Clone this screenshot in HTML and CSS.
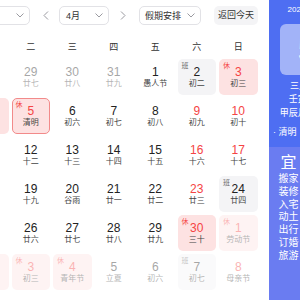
FILE: index.html
```html
<!DOCTYPE html>
<html lang="zh-CN">
<head>
  <meta charset="UTF-8">
  <title>万年历</title>
  <link rel="stylesheet" href="styles.css">
</head>
<body>

<div class="cal">
  <div class="main">
    <div class="toolbar">
      <div class="select year"><span>2022年</span><svg class="caret" width="8" height="5" viewBox="0 0 8 5"><polyline points="0.5,0.5 4,4 7.5,0.5"/></svg></div>
      <div class="arrow prev"><svg width="6" height="9" viewBox="0 0 6 9"><polyline points="5,0.5 1,4.5 5,8.5"/></svg></div>
      <div class="select month"><span>4月</span><svg class="caret" width="8" height="5" viewBox="0 0 8 5"><polyline points="0.5,0.5 4,4 7.5,0.5"/></svg></div>
      <div class="arrow next"><svg width="6" height="9" viewBox="0 0 6 9"><polyline points="1,0.5 5,4.5 1,8.5"/></svg></div>
      <div class="select holiday"><span>假期安排</span><svg class="caret" width="8" height="5" viewBox="0 0 8 5"><polyline points="0.5,0.5 4,4 7.5,0.5"/></svg></div>
      <div class="today-btn">返回今天</div>
    </div>

    <div class="weekdays">
      <span>一</span><span>二</span><span>三</span><span>四</span><span>五</span><span>六</span><span>日</span>
    </div>

    <div class="days">
      <div class="day other"><span class="num">28</span><span class="lunar">廿六</span></div>
      <div class="day other"><span class="num">29</span><span class="lunar">廿七</span></div>
      <div class="day other"><span class="num">30</span><span class="lunar">廿八</span></div>
      <div class="day other"><span class="num">31</span><span class="lunar">廿九</span></div>
      <div class="day"><span class="num">1</span><span class="lunar">愚人节</span></div>
      <div class="day work"><span class="tag">班</span><span class="num">2</span><span class="lunar">初二</span></div>
      <div class="day rest"><span class="tag">休</span><span class="num">3</span><span class="lunar">初三</span></div>

      <div class="day rest"><span class="tag">休</span><span class="num">4</span><span class="lunar">初四</span></div>
      <div class="day rest sel"><span class="tag">休</span><span class="num">5</span><span class="lunar">清明</span></div>
      <div class="day"><span class="num">6</span><span class="lunar">初六</span></div>
      <div class="day"><span class="num">7</span><span class="lunar">初七</span></div>
      <div class="day"><span class="num">8</span><span class="lunar">初八</span></div>
      <div class="day wknd"><span class="num">9</span><span class="lunar">初九</span></div>
      <div class="day wknd"><span class="num">10</span><span class="lunar">初十</span></div>

      <div class="day"><span class="num">11</span><span class="lunar">十一</span></div>
      <div class="day"><span class="num">12</span><span class="lunar">十二</span></div>
      <div class="day"><span class="num">13</span><span class="lunar">十三</span></div>
      <div class="day"><span class="num">14</span><span class="lunar">十四</span></div>
      <div class="day"><span class="num">15</span><span class="lunar">十五</span></div>
      <div class="day wknd"><span class="num">16</span><span class="lunar">十六</span></div>
      <div class="day wknd"><span class="num">17</span><span class="lunar">十七</span></div>

      <div class="day"><span class="num">18</span><span class="lunar">十八</span></div>
      <div class="day"><span class="num">19</span><span class="lunar">十九</span></div>
      <div class="day"><span class="num">20</span><span class="lunar">谷雨</span></div>
      <div class="day"><span class="num">21</span><span class="lunar">廿一</span></div>
      <div class="day"><span class="num">22</span><span class="lunar">廿二</span></div>
      <div class="day wknd"><span class="num">23</span><span class="lunar">廿三</span></div>
      <div class="day work"><span class="tag">班</span><span class="num">24</span><span class="lunar">廿四</span></div>

      <div class="day"><span class="num">25</span><span class="lunar">廿五</span></div>
      <div class="day"><span class="num">26</span><span class="lunar">廿六</span></div>
      <div class="day"><span class="num">27</span><span class="lunar">廿七</span></div>
      <div class="day"><span class="num">28</span><span class="lunar">廿八</span></div>
      <div class="day"><span class="num">29</span><span class="lunar">廿九</span></div>
      <div class="day rest"><span class="tag">休</span><span class="num">30</span><span class="lunar">三十</span></div>
      <div class="day rest other"><span class="tag">休</span><span class="num">1</span><span class="lunar">劳动节</span></div>

      <div class="day rest other"><span class="tag">休</span><span class="num">2</span><span class="lunar">初二</span></div>
      <div class="day rest other"><span class="tag">休</span><span class="num">3</span><span class="lunar">初三</span></div>
      <div class="day rest other"><span class="tag">休</span><span class="num">4</span><span class="lunar">青年节</span></div>
      <div class="day other"><span class="num">5</span><span class="lunar">立夏</span></div>
      <div class="day other"><span class="num">6</span><span class="lunar">初六</span></div>
      <div class="day work other"><span class="tag">班</span><span class="num">7</span><span class="lunar">初七</span></div>
      <div class="day wknd other"><span class="num">8</span><span class="lunar">母亲节</span></div>
    </div>
  </div>

  <div class="side">
    <div class="info">
      <div class="date">2022-04-05</div>
      <div class="big">5</div>
      <div class="lines">
        <div>三月初五</div>
        <div>壬寅年 虎</div>
        <div>甲辰月 戊子日</div>
      </div>
      <div class="fest">· 清明</div>
    </div>
    <div class="yiji">
      <div class="col">
        <div class="head">宜</div>
        <div>搬家</div>
        <div>装修</div>
        <div>入宅</div>
        <div>动土</div>
        <div>出行</div>
        <div>订婚</div>
        <div>旅游</div>
      </div>
      <div class="col">
        <div class="head">忌</div>
        <div>安葬</div>
        <div>破土</div>
      </div>
    </div>
  </div>
</div>

</body>
</html>
```

FILE: styles.css
```css
* {
  box-sizing: border-box;
}

body {
  margin: 0;
  overflow: hidden;
  background: #fff;
  color: #333;
  font-family: Arial, "Liberation Sans", "Noto Sans CJK SC", sans-serif;
}

.cal {
  display: flex;
  margin-left: -30px;
  min-height: 320px;
}

.main {
  width: 287.5px;
  flex-shrink: 0;
}

/* toolbar */
.toolbar {
  display: flex;
  align-items: center;
  height: 19px;
  margin-top: 6px;
  font-size: 9px;
}

.select {
  display: flex;
  align-items: center;
  justify-content: space-between;
  flex-shrink: 0;
  height: 19px;
  padding: 0 5px 0 6px;
  border: 1px solid #e2e2e6;
  border-radius: 5px;
  color: #333;
  white-space: nowrap;
}

.select span,
.select svg {
  flex-shrink: 0;
}

.year {
  width: 72px;
  margin-left: -12px;
}

.month {
  width: 50px;
}

.holiday {
  width: 62px;
  padding-left: 5px;
}

.caret polyline,
.arrow polyline {
  fill: none;
  stroke: #9a9aa0;
  stroke-width: 1;
}

.arrow {
  display: flex;
  align-items: center;
  justify-content: center;
  flex-shrink: 0;
  height: 19px;
}

.prev {
  width: 29px;
  padding-left: 3px;
}

.next {
  width: 30px;
  padding-right: 3px;
}

.today-btn {
  flex-shrink: 0;
  width: 44px;
  height: 19px;
  margin-left: 13px;
  line-height: 19px;
  text-align: center;
  background: #f4f4f6;
  border-radius: 5px;
  color: #333;
}

/* weekdays */
.weekdays {
  display: grid;
  grid-template-columns: repeat(7, 38.5px);
  column-gap: 3px;
  margin-top: 13px;
  height: 18px;
  line-height: 18px;
  font-size: 9px;
  text-align: center;
  color: #333;
}

/* day grid */
.days {
  display: grid;
  grid-template-columns: repeat(7, 38.5px);
  grid-auto-rows: 36px;
  gap: 3px;
  margin-top: 3px;
}

.day {
  position: relative;
  padding-top: 5px;
  border: 1px solid transparent;
  border-radius: 5px;
  text-align: center;
}

.num {
  display: block;
  font-size: 12px;
  line-height: 14px;
  color: #222;
}

.lunar {
  display: block;
  font-size: 8px;
  line-height: 10px;
  color: #444;
}

.tag {
  position: absolute;
  top: 2px;
  left: 3px;
  font-size: 7px;
  line-height: 8px;
}

.wknd .num {
  color: #f54444;
}

.rest {
  background: #fde2e2;
}

.rest .num,
.rest .tag {
  color: #f54444;
}

.work {
  background: #f4f4f6;
}

.work .tag {
  color: #666;
}

.sel {
  border-color: #f28a8a;
}

.other {
  opacity: 0.4;
}

/* side panel */
.side {
  width: 78px;
  margin-left: 11.5px;
  flex-shrink: 0;
  display: flex;
  flex-direction: column;
  color: #fff;
}

.info {
  background: #4e6ef2;
  padding: 5px 0 9px;
  text-align: center;
}

.date {
  font-size: 8px;
  line-height: 10px;
}

.big {
  margin: 9px 11px 0;
  height: 51px;
  border-radius: 6px;
  background: rgba(255, 255, 255, 0.48);
  font-size: 38px;
  line-height: 51px;
}

.lines {
  margin-top: 4.5px;
  font-size: 9px;
  line-height: 13.5px;
}

.fest {
  margin-top: 6px;
  padding-left: 4px;
  text-align: left;
  font-size: 9px;
  line-height: 12px;
}

.yiji {
  flex: 1;
  display: flex;
  padding-top: 6px;
  background: #6a7cf1;
}

.col {
  flex: 1;
  text-align: center;
  font-size: 10px;
  line-height: 12.8px;
}

.col .head {
  font-size: 16px;
  line-height: 20px;
}
```
